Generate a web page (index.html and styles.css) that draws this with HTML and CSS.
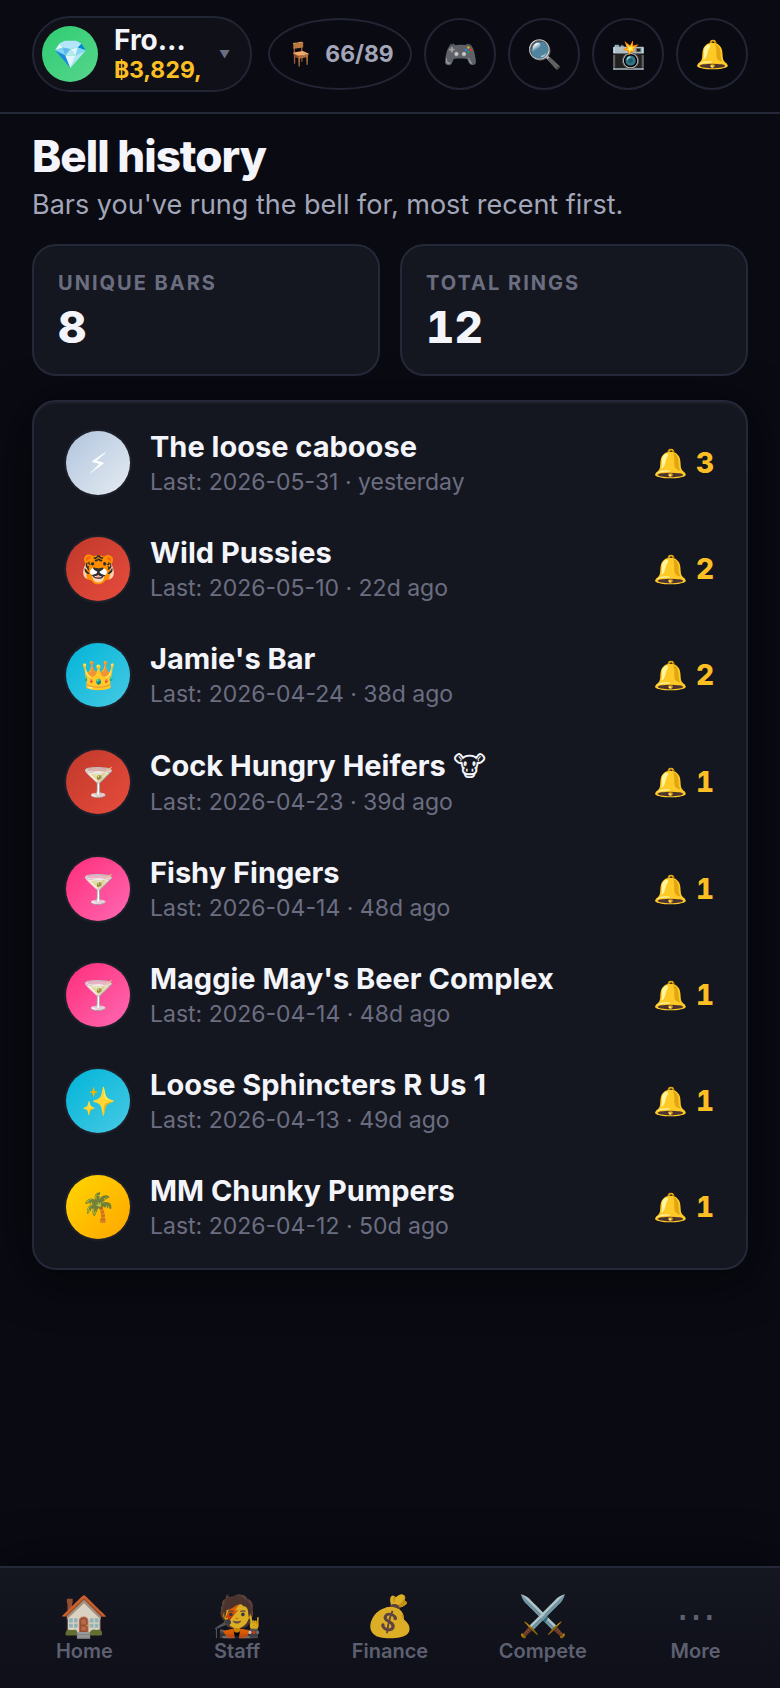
FILE: index.html
```html
<!DOCTYPE html>
<html lang="en">
<head>
<meta charset="utf-8">
<meta name="viewport" content="width=device-width, initial-scale=1">
<title>Bell history</title>
<link rel="stylesheet" href="styles.css">
</head>
<body>
<div class="app">
  <header class="topbar">
    <button class="profile" type="button">
      <span class="profile-avatar">💎</span>
      <span class="profile-text">
        <span class="profile-name">Fro…</span>
        <span class="profile-cash">฿3,829,</span>
      </span>
      <span class="profile-caret">▼</span>
    </button>
    <button class="round seats" type="button"><span class="seats-icon">🪑</span><span>66/89</span></button>
    <button class="round" type="button" aria-label="Games">🎮</button>
    <button class="round" type="button" aria-label="Search">🔍</button>
    <button class="round" type="button" aria-label="Photos">📸</button>
    <button class="round" type="button" aria-label="Notifications">🔔</button>
  </header>

  <main class="content">
    <h1 class="title">Bell history</h1>
    <p class="subtitle">Bars you've rung the bell for, most recent first.</p>

    <section class="stats">
      <div class="stat"><div class="stat-label">Unique bars</div><div class="stat-value">8</div></div>
      <div class="stat"><div class="stat-label">Total rings</div><div class="stat-value">12</div></div>
    </section>

    <ul class="bars">
      <li class="bar"><span class="avatar silver">⚡︎</span><div class="bar-text"><div class="bar-name">The loose caboose</div><div class="bar-last">Last: 2026-05-31 · yesterday</div></div><span class="rings">🔔 3</span></li>
      <li class="bar"><span class="avatar red">🐯</span><div class="bar-text"><div class="bar-name">Wild Pussies</div><div class="bar-last">Last: 2026-05-10 · 22d ago</div></div><span class="rings">🔔 2</span></li>
      <li class="bar"><span class="avatar cyan">👑</span><div class="bar-text"><div class="bar-name">Jamie's Bar</div><div class="bar-last">Last: 2026-04-24 · 38d ago</div></div><span class="rings">🔔 2</span></li>
      <li class="bar"><span class="avatar red">🍸</span><div class="bar-text"><div class="bar-name">Cock Hungry Heifers <span class="glyph">🐮︎</span></div><div class="bar-last">Last: 2026-04-23 · 39d ago</div></div><span class="rings">🔔 1</span></li>
      <li class="bar"><span class="avatar pink">🍸</span><div class="bar-text"><div class="bar-name">Fishy Fingers</div><div class="bar-last">Last: 2026-04-14 · 48d ago</div></div><span class="rings">🔔 1</span></li>
      <li class="bar"><span class="avatar pink">🍸</span><div class="bar-text"><div class="bar-name">Maggie May's Beer Complex</div><div class="bar-last">Last: 2026-04-14 · 48d ago</div></div><span class="rings">🔔 1</span></li>
      <li class="bar"><span class="avatar cyan">✨</span><div class="bar-text"><div class="bar-name">Loose Sphincters R Us 1</div><div class="bar-last">Last: 2026-04-13 · 49d ago</div></div><span class="rings">🔔 1</span></li>
      <li class="bar"><span class="avatar gold">🌴</span><div class="bar-text"><div class="bar-name">MM Chunky Pumpers</div><div class="bar-last">Last: 2026-04-12 · 50d ago</div></div><span class="rings">🔔 1</span></li>
    </ul>
  </main>

  <nav class="tabs">
    <a class="tab" href="#home"><span class="tab-icon">🏠</span><span class="tab-label">Home</span></a>
    <a class="tab" href="#staff"><span class="tab-icon">🧑‍🎤</span><span class="tab-label">Staff</span></a>
    <a class="tab" href="#finance"><span class="tab-icon">💰</span><span class="tab-label">Finance</span></a>
    <a class="tab" href="#compete"><span class="tab-icon">⚔️</span><span class="tab-label">Compete</span></a>
    <a class="tab" href="#more"><span class="tab-icon">⋯</span><span class="tab-label">More</span></a>
  </nav>
</div>
</body>
</html>
```
FILE: styles.css
```css
* { box-sizing: border-box; }

body {
  margin: 0;
  background: #090a12;
  color: #f4f5fa;
  font-family: Inter, "Noto Sans", sans-serif;
  font-size: 28px;
}

button { font: inherit; color: inherit; background: none; cursor: pointer; }

.app { display: flex; flex-direction: column; min-height: 100vh; }

/* Top bar */
.topbar {
  display: flex;
  align-items: center;
  gap: 12px;
  padding: 16px 32px 20px;
  border-bottom: 2px solid #242838;
}

.profile {
  display: flex;
  flex: 1;
  min-width: 0;
  align-items: center;
  gap: 16px;
  height: 76px;
  margin-right: 4px;
  padding: 8px 20px 8px 8px;
  border: 2px solid #222534;
  border-radius: 38px;
  background: #0f1018;
  text-align: left;
}
.profile-avatar {
  display: grid;
  flex: none;
  place-items: center;
  width: 56px;
  height: 56px;
  border-radius: 50%;
  background: linear-gradient(135deg, #2ecc71, #58d68d);
  font-size: 28px;
}
.profile-text { flex: 1; min-width: 0; }
.profile-name, .profile-cash { display: block; white-space: nowrap; }
.profile-name { font-size: 28px; font-weight: 700; line-height: 32px; }
.profile-cash { color: #fbbf24; font-size: 23px; font-weight: 700; line-height: 28px; font-variant-numeric: tabular-nums; }
.profile-caret { color: #6b6e80; font-size: 11px; }

.round {
  display: flex;
  flex: none;
  align-items: center;
  justify-content: center;
  width: 72px;
  height: 72px;
  padding: 0;
  border: 2px solid #222534;
  border-radius: 50%;
  font-size: 28px;
}
.seats { gap: 10px; width: 144px; color: #a3a6b8; font-size: 23px; font-weight: 700; font-variant-numeric: tabular-nums; }
.seats-icon { font-size: 23px; }

/* Page */
.content { flex: 1; padding: 16px 32px 40px; }
.title { margin: 0; font-size: 44px; font-weight: 800; line-height: 52px; letter-spacing: -1px; }
.subtitle { margin: 4px 0 20px; color: #a3a6b8; font-size: 27px; line-height: 38px; }

.stats { display: grid; grid-template-columns: 1fr 1fr; gap: 20px; margin-bottom: 24px; }
.stat { padding: 24px 24px 20px; border: 2px solid #242838; border-radius: 24px; background: #151720; }
.stat-label { color: #6b6e80; font-size: 20px; font-weight: 700; line-height: 26px; letter-spacing: 2px; text-transform: uppercase; }
.stat-value { margin-top: 4px; font-size: 44px; font-weight: 800; line-height: 54px; font-variant-numeric: tabular-nums; }

.bars {
  margin: 0;
  padding: 8px 32px;
  border: 2px solid #242838;
  border-radius: 24px;
  background: #151720;
  box-shadow: 0 8px 48px rgba(0, 0, 0, 0.5), inset 0 2px 0 rgba(255, 255, 255, 0.03);
  list-style: none;
}
.bar { display: flex; align-items: center; gap: 20px; padding: 20px 0; }
.avatar {
  display: grid;
  flex: none;
  place-items: center;
  width: 64px;
  height: 64px;
  border-radius: 50%;
  box-shadow: 0 0 0 2px #1d202a;
  color: #ffffff;
  font-size: 28px;
}
.silver { background: linear-gradient(135deg, #b0c4de, #e6ecf2); }
.red { background: linear-gradient(135deg, #c0392b, #e74c3c); }
.cyan { background: linear-gradient(135deg, #00b4d8, #48cae4); }
.pink { background: linear-gradient(135deg, #ff2d78, #ff69b4); }
.gold { background: linear-gradient(135deg, #ffd700, #ffa500); }
.bar-text { flex: 1; min-width: 0; }
.bar-name { margin-bottom: 4px; font-size: 29px; font-weight: 700; line-height: 34px; }
.glyph { font-size: 28px; font-weight: 400; line-height: 36px; }
.bar-last { color: #6b6e80; font-size: 23px; line-height: 28px; }
.rings { color: #fbbf24; font-weight: 800; font-variant-numeric: tabular-nums; white-space: nowrap; }

/* Bottom tabs */
.tabs {
  position: sticky;
  bottom: 0;
  display: flex;
  padding: 24px 8px 26px;
  border-top: 2px solid #242838;
  background: linear-gradient(#151720, #0e0f18);
  box-shadow: 0 -8px 48px rgba(0, 0, 0, 0.3);
}
.tab {
  display: flex;
  flex: 1 1 0;
  flex-direction: column;
  align-items: center;
  color: #6b6e80;
  text-decoration: none;
  opacity: 0.85;
}
.tab-icon { font-size: 40px; line-height: 48px; }
.tab-label { font-size: 20px; font-weight: 600; line-height: 22px; }
```
